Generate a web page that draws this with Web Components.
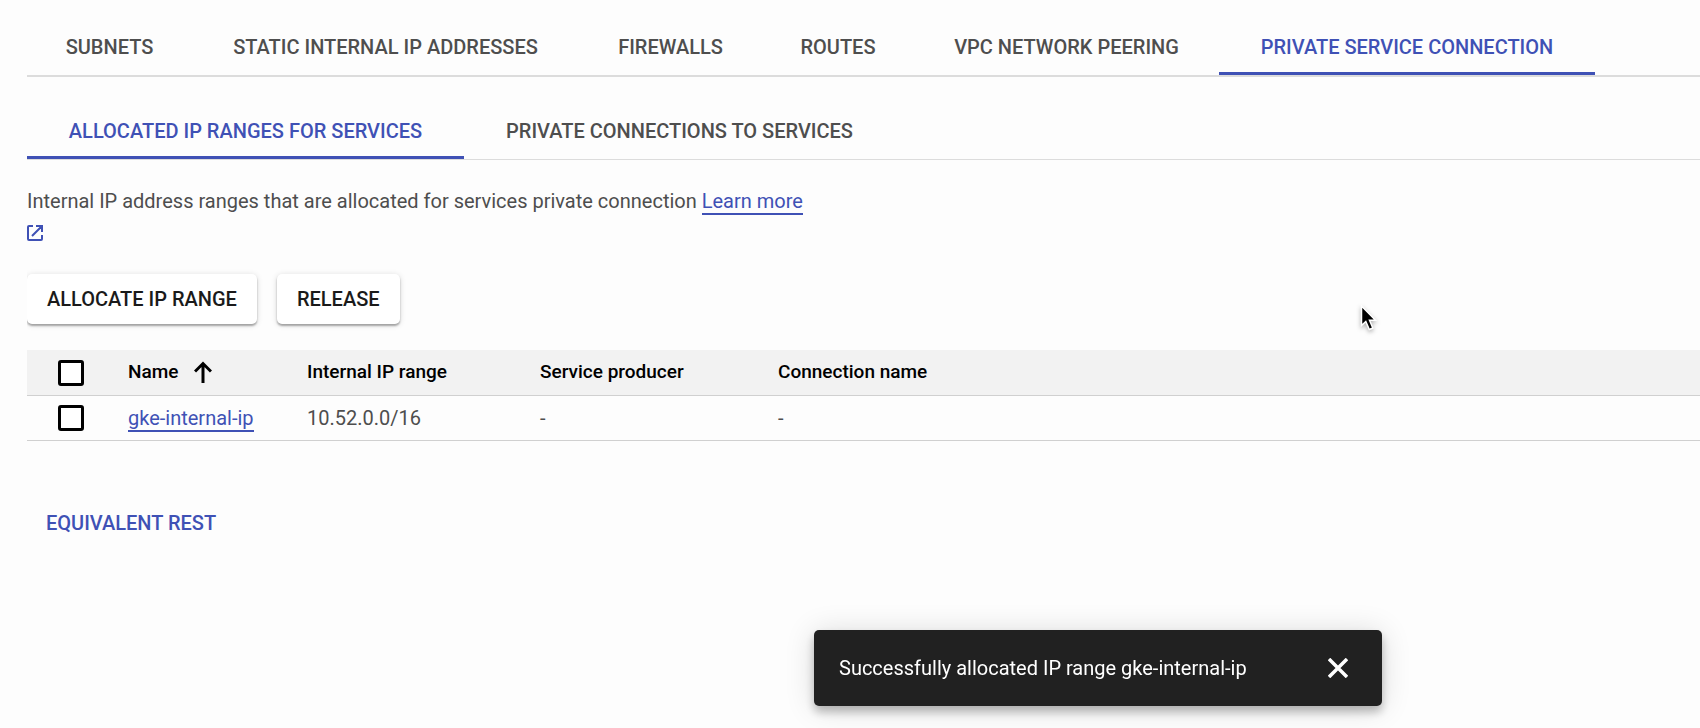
<!DOCTYPE html>
<html lang="en">
<head>
<meta charset="utf-8">
<title>Private service connection</title>
<style>
  html { --accent: #3f51b5; --text: #4e4e4e; --line: #dcdcdc; background: #fdfdfd; }
  body { margin: 0; font: 400 20px/32px Roboto, sans-serif; color: var(--text); overflow-x: hidden; }
</style>
</head>
<body>
<vpc-page>
  <tab-bar label="Network details" columns="165px 387px 183px 152px 305px 376px" thick>
    <tab-item>SUBNETS</tab-item>
    <tab-item>STATIC INTERNAL IP ADDRESSES</tab-item>
    <tab-item>FIREWALLS</tab-item>
    <tab-item>ROUTES</tab-item>
    <tab-item>VPC NETWORK PEERING</tab-item>
    <tab-item selected>PRIVATE SERVICE CONNECTION</tab-item>
  </tab-bar>
  <tab-bar label="Private service connection" columns="437px 431px">
    <tab-item selected>ALLOCATED IP RANGES FOR SERVICES</tab-item>
    <tab-item>PRIVATE CONNECTIONS TO SERVICES</tab-item>
  </tab-bar>
  <help-text href="#learn" link="Learn more">Internal IP address ranges that are allocated for services private connection</help-text>
  <action-row>
    <action-button>ALLOCATE IP RANGE</action-button>
    <action-button>RELEASE</action-button>
  </action-row>
  <range-table></range-table>
  <rest-link></rest-link>
</vpc-page>
<toast-message>Successfully allocated IP range gke-internal-ip</toast-message>
<mouse-pointer></mouse-pointer>

<script>
const define = (name, html, setup) => customElements.define(name, class extends HTMLElement {
  constructor() {
    super();
    const t = document.createElement('template');
    t.innerHTML = html;
    this.attachShadow({ mode: 'open' }).append(t.content.cloneNode(true));
  }
  connectedCallback() { if (setup) setup(this, this.shadowRoot); }
});

define('vpc-page', `
  <style>
    :host { display: flex; flex-direction: column; padding: 19px 0 0 27px; }
    ::slotted(tab-bar:nth-of-type(2)) { margin-top: 26px; }
  </style>
  <slot></slot>`);

define('tab-bar', `
  <style>
    :host { display: block; border-bottom: 1px solid var(--line); }
    :host([thick]) { border-bottom-width: 2px; }
    div { display: grid; }
  </style>
  <div role="tablist"><slot></slot></div>`,
  (el, root) => {
    const list = root.querySelector('div');
    list.setAttribute('aria-label', el.getAttribute('label'));
    list.style.gridTemplateColumns = el.getAttribute('columns');
  });

define('tab-item', `
  <style>
    :host { display: block; }
    button { display: block; width: 100%; height: 56px; padding: 3px 0 0; border: 0; border-bottom: 3px solid transparent;
      background: none; font: 500 20px/24px Roboto, sans-serif; color: var(--text); white-space: nowrap; }
    :host([selected]) button { color: var(--accent); border-bottom-color: var(--accent); }
  </style>
  <button type="button" role="tab"><slot></slot></button>`,
  (el, root) => root.querySelector('button').setAttribute('aria-selected', el.hasAttribute('selected')));

define('help-text', `
  <style>
    :host { display: block; padding-top: 25px; }
    p { margin: 0; max-width: 790px; }
    a { color: var(--accent); text-decoration: none; }
    span { border-bottom: 2px solid var(--accent); }
    svg { display: inline-block; vertical-align: -1px; width: 16px; height: 16px; }
  </style>
  <p><slot></slot> <a><span></span> <svg viewBox="0 0 16 16" fill="none" stroke="currentColor" stroke-width="2" aria-hidden="true"><path d="M6 1H2Q1 1 1 2V14Q1 15 2 15H14Q15 15 15 14V10M9 1H15V7M15 1L5 11"/></svg></a></p>`,
  (el, root) => {
    root.querySelector('a').href = el.getAttribute('href');
    root.querySelector('span').textContent = el.getAttribute('link');
  });

define('action-row', `
  <style>
    :host { display: flex; gap: 20px; margin: 25px 0 26px; clip-path: inset(-8px 0 -8px 0); }
  </style>
  <slot></slot>`);

define('action-button', `
  <style>
    :host { display: block; }
    button { display: block; height: 50px; padding: 0 20px; border: 0; border-radius: 5px; background: #fff;
      font: 500 20px/24px Roboto, sans-serif; color: #1a1a1a;
      box-shadow: 0 2px 2px rgba(0,0,0,.3), 0 1px 6px rgba(0,0,0,.14); }
  </style>
  <button type="button"><slot></slot></button>`);

define('check-box', `
  <style>
    :host { display: block; width: 26px; height: 26px; }
    input { appearance: none; display: block; box-sizing: border-box; width: 26px; height: 26px; margin: 0;
      border: 3px solid #000; border-radius: 3px; background: #fff; }
  </style>
  <input type="checkbox">`,
  (el, root) => root.querySelector('input').setAttribute('aria-label', el.getAttribute('label')));

define('range-table', `
  <style>
    :host { display: block; }
    table { width: 100%; border-collapse: collapse; table-layout: fixed; text-align: left; }
    th, td { box-sizing: border-box; height: 45px; padding: 0; border-bottom: 1px solid #d0d0d0; }
    th { background: #f2f2f2; font-weight: 500; font-size: 19px; line-height: 24px; color: #000; }
    td { line-height: 24px; }
    .pick { width: 101px; padding-top: 2px; } .name { width: 179px; } .ip { width: 233px; } .producer { width: 238px; }
    check-box { margin-left: 31px; }
    .sort { display: flex; align-items: center; gap: 16px; }
    a { color: var(--accent); text-decoration: none; border-bottom: 2px solid var(--accent); }
  </style>
  <table>
    <thead><tr>
      <th class="pick"><check-box label="Select all"></check-box></th>
      <th class="name"><div class="sort">Name
        <svg width="18" height="22" viewBox="0 0 18 22" fill="none" stroke="#000" stroke-width="3" aria-hidden="true"><path d="M9 22V2.500M1 10.500L9 2.500L17 10.500"/></svg></div></th>
      <th class="ip">Internal IP range</th>
      <th class="producer">Service producer</th>
      <th>Connection name</th>
    </tr></thead>
    <tbody><tr>
      <td><check-box label="Select gke-internal-ip"></check-box></td>
      <td><a href="#gke-internal-ip">gke-internal-ip</a></td>
      <td>10.52.0.0/16</td><td>-</td><td>-</td>
    </tr></tbody>
  </table>`);

define('rest-link', `
  <style>
    :host { display: block; padding: 66px 19px 0; }
    a { font-weight: 500; color: var(--accent); text-decoration: none; }
  </style>
  <a href="#rest">EQUIVALENT REST</a>`);

define('toast-message', `
  <style>
    :host { position: fixed; right: 318px; bottom: 22px; display: flex; align-items: center;
      box-sizing: border-box; height: 76px; width: 568px; justify-content: space-between; padding: 0 34px 0 25px;
      border-radius: 5px; background: #212121; color: #fff; white-space: nowrap;
      box-shadow: 0 6px 10px rgba(0,0,0,.25), 0 2px 30px rgba(0,0,0,.14); }
    button { display: block; padding: 0; border: 0; background: none; color: #fff; }
    svg { display: block; }
  </style>
  <span role="status"><slot></slot></span>
  <button type="button" aria-label="Close"><svg width="20" height="20" viewBox="0 0 20 20" fill="none" stroke="currentColor" stroke-width="3.500"><path d="M1 1L19 19M19 1L1 19"/></svg></button>`);

define('mouse-pointer', `
  <style>
    :host { position: fixed; left: 1360px; top: 304px; pointer-events: none; }
    svg { display: block; filter: drop-shadow(0 2px 2px rgba(0,0,0,.3)); }
  </style>
  <svg width="18" height="28" viewBox="0 0 18 28" aria-hidden="true"><path d="M1.500 2V21.500L5.800 17.500L9.300 25.500L12.800 24L9.500 16.200H15.500Z" fill="#000" stroke="#fff" stroke-width="1.500"/></svg>`);
</script>
</body>
</html>
